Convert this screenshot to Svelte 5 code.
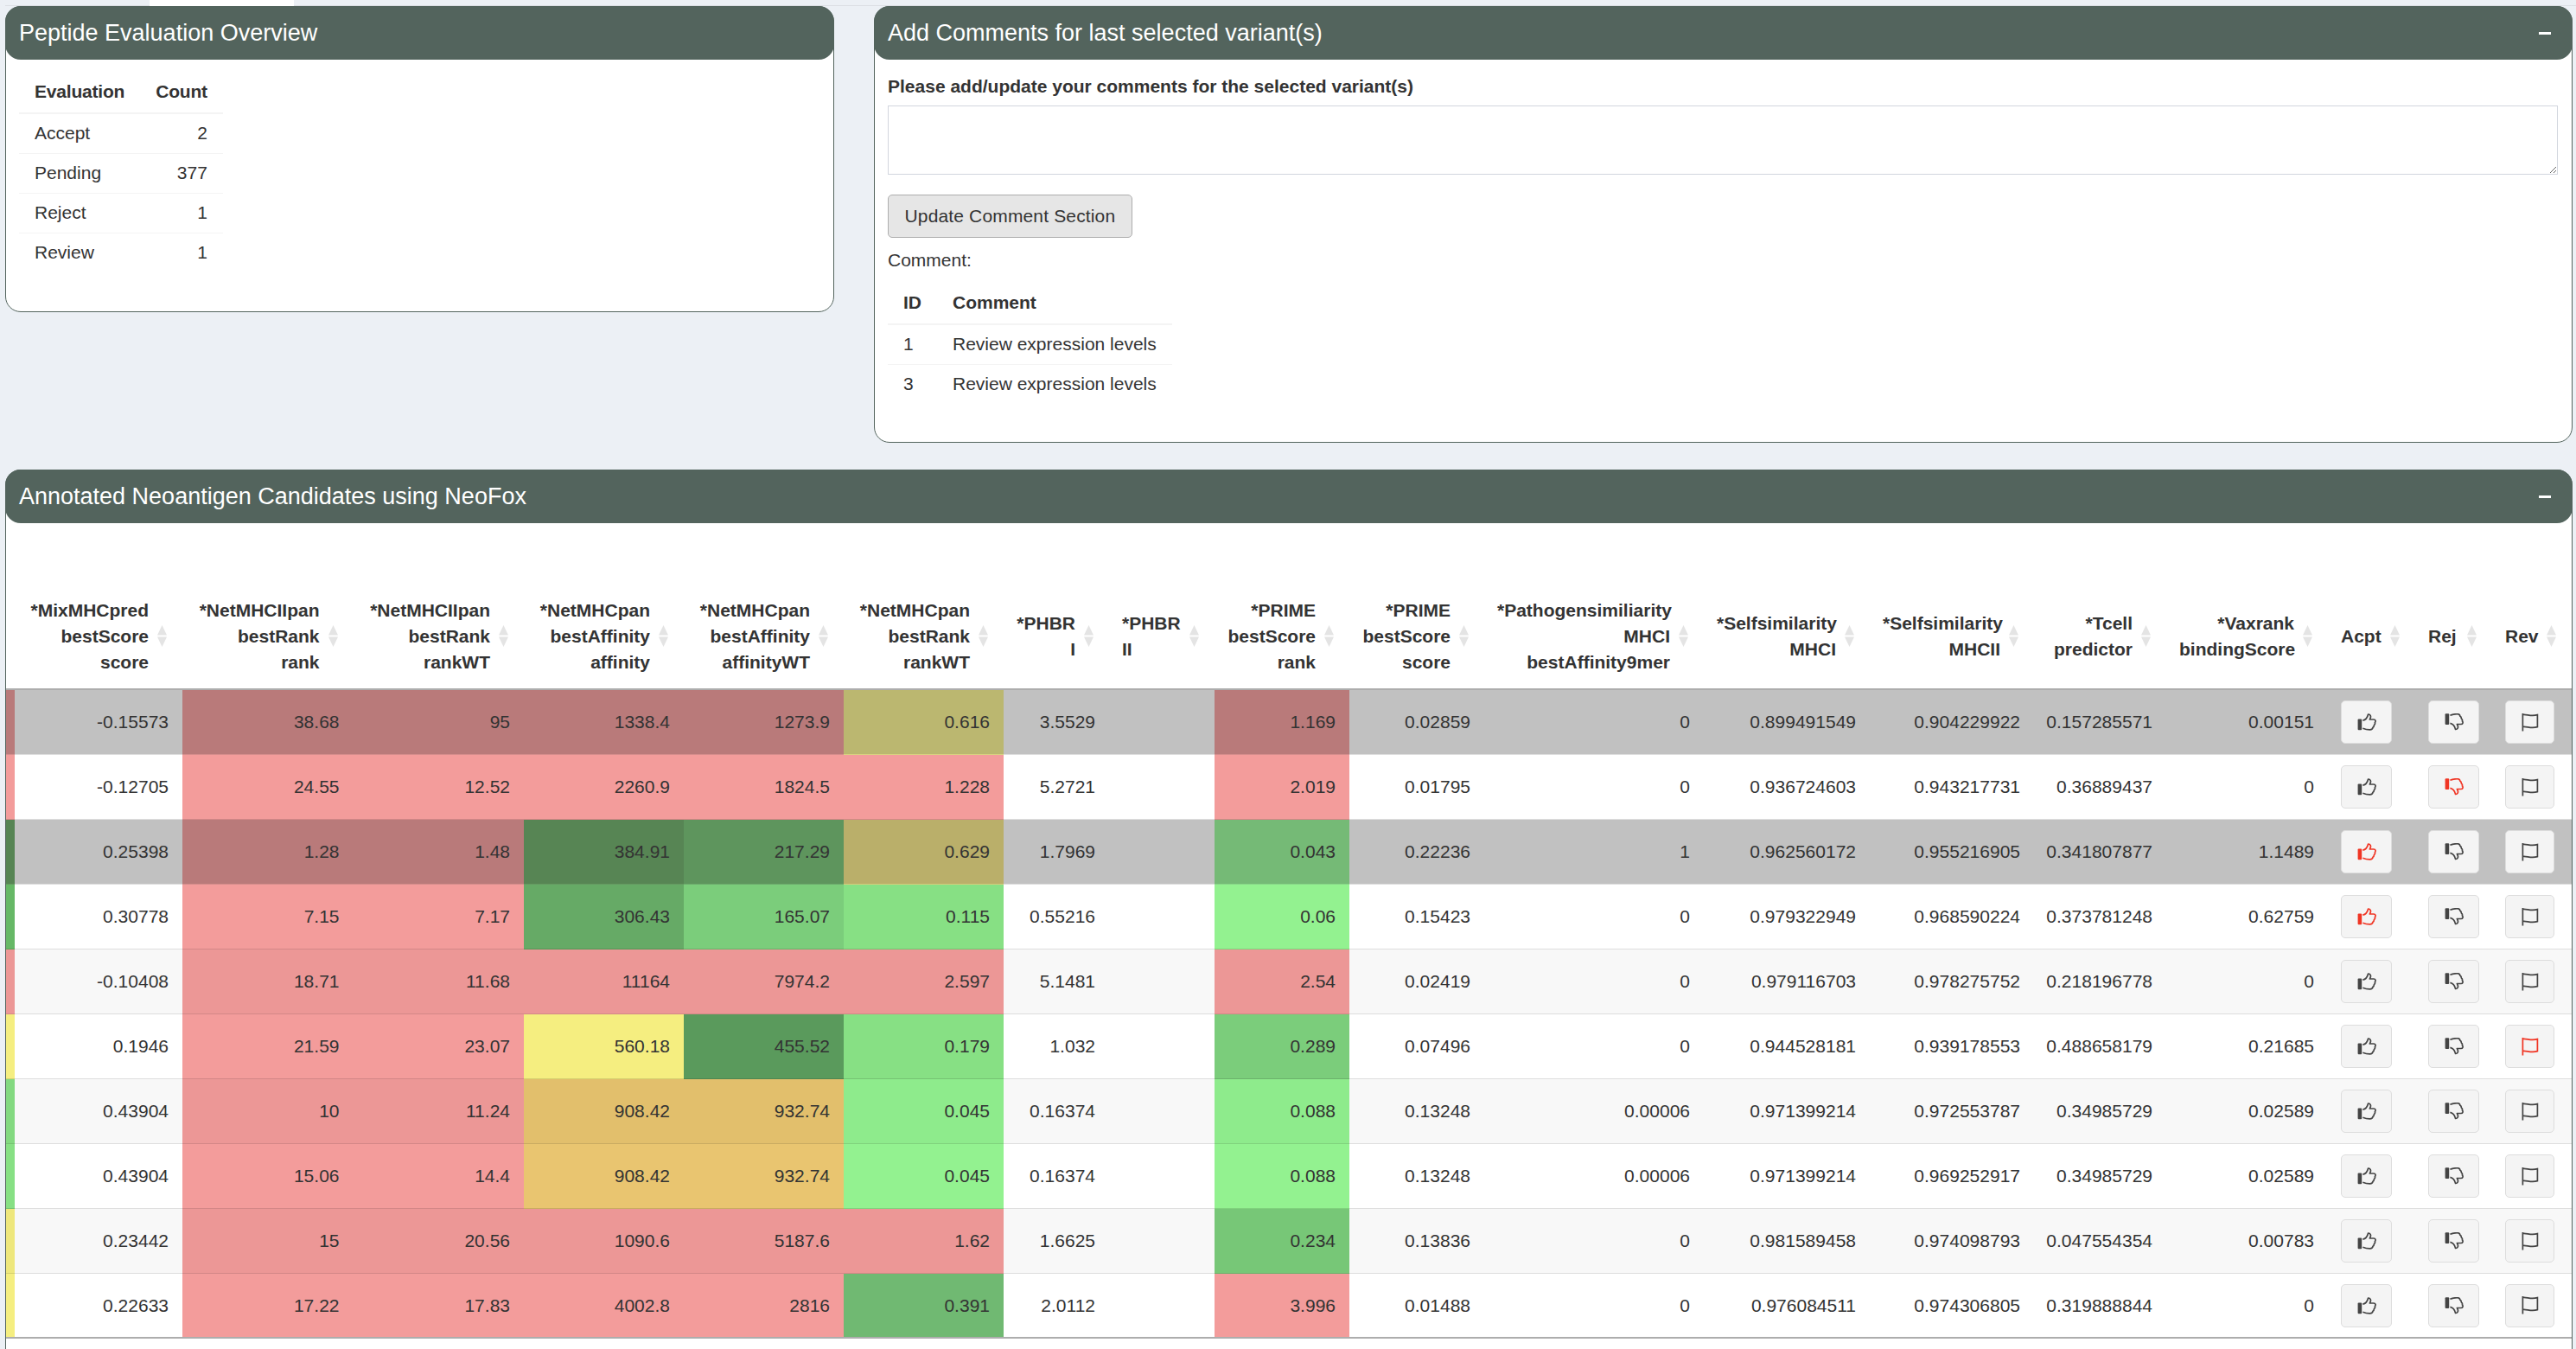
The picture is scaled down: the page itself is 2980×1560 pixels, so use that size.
<script lang="ts">
	const R = '#f39c9b';
	const RS = '#f5a2a1';
	const LG = '#93f290';
	const Y = '#f5ee80';
	const O = '#e9c570';

	const evaluations = [
		['Accept', 2],
		['Pending', 377],
		['Reject', 1],
		['Review', 1]
	];

	const comments = [
		[1, 'Review expression levels'],
		[3, 'Review expression levels']
	];

	const columns = [
		{ w: 194, lines: ['*MixMHCpred', 'bestScore', 'score'] },
		{ w: 197.5, lines: ['*NetMHCIIpan', 'bestRank', 'rank'] },
		{ w: 197.5, lines: ['*NetMHCIIpan', 'bestRank', 'rankWT'] },
		{ w: 185, lines: ['*NetMHCpan', 'bestAffinity', 'affinity'] },
		{ w: 185, lines: ['*NetMHCpan', 'bestAffinity', 'affinityWT'] },
		{ w: 185, lines: ['*NetMHCpan', 'bestRank', 'rankWT'] },
		{ w: 122, lines: ['*PHBR', 'I'] },
		{ w: 122, lines: ['*PHBR', 'II'], left: true },
		{ w: 156, lines: ['*PRIME', 'bestScore', 'rank'] },
		{ w: 156, lines: ['*PRIME', 'bestScore', 'score'] },
		{ w: 254, lines: ['*Pathogensimiliarity', 'MHCI', 'bestAffinity9mer'] },
		{ w: 192, lines: ['*Selfsimilarity', 'MHCI'] },
		{ w: 190, lines: ['*Selfsimilarity', 'MHCII'] },
		{ w: 153, lines: ['*Tcell', 'predictor'] },
		{ w: 187, lines: ['*Vaxrank', 'bindingScore'] },
		{ w: 101, lines: ['Acpt'], left: true },
		{ w: 89, lines: ['Rej'], left: true },
		{ w: 92, lines: ['Rev'], left: true }
	];

	// each value is [text, cell colour]; mark says which action button is red
	const rows = [
		{
			sel: true, strip: RS, mark: '',
			cells: [['-0.15573'], ['38.68', RS], ['95', RS], ['1338.4', RS], ['1273.9', RS], ['0.616', '#f8f294'], ['3.5529'], [''], ['1.169', RS], ['0.02859'], ['0'], ['0.899491549'], ['0.904229922'], ['0.157285571'], ['0.00151']]
		},
		{
			strip: R, mark: 'rej',
			cells: [['-0.12705'], ['24.55', R], ['12.52', R], ['2260.9', R], ['1824.5', R], ['1.228', R], ['5.2721'], [''], ['2.019', R], ['0.01795'], ['0'], ['0.936724603'], ['0.943217731'], ['0.36889437'], ['0']]
		},
		{
			sel: true, strip: '#74b070', mark: 'acpt',
			cells: [['0.25398'], ['1.28', RS], ['1.48', RS], ['384.91', '#74b070'], ['217.29', '#7dc57b'], ['0.629', '#f6e88d'], ['1.7969'], [''], ['0.043', '#9bf69c'], ['0.22236'], ['1'], ['0.962560172'], ['0.955216905'], ['0.341807877'], ['1.1489']]
		},
		{
			strip: '#66b866', mark: 'acpt',
			cells: [['0.30778'], ['7.15', R], ['7.17', R], ['306.43', '#66aa66'], ['165.07', '#7bcd7b'], ['0.115', '#87e084'], ['0.55216'], [''], ['0.06', LG], ['0.15423'], ['0'], ['0.979322949'], ['0.968590224'], ['0.373781248'], ['0.62759']]
		},
		{
			odd: true, strip: R, mark: '',
			cells: [['-0.10408'], ['18.71', R], ['11.68', R], ['11164', R], ['7974.2', R], ['2.597', R], ['5.1481'], [''], ['2.54', R], ['0.02419'], ['0'], ['0.979116703'], ['0.978275752'], ['0.218196778'], ['0']]
		},
		{
			strip: Y, mark: 'rev',
			cells: [['0.1946'], ['21.59', R], ['23.07', R], ['560.18', Y], ['455.52', '#5a9a5c'], ['0.179', '#87e084'], ['1.032'], [''], ['0.289', '#7bcd7b'], ['0.07496'], ['0'], ['0.944528181'], ['0.939178553'], ['0.488658179'], ['0.21685']]
		},
		{
			odd: true, strip: '#87e084', mark: '',
			cells: [['0.43904'], ['10', R], ['11.24', R], ['908.42', O], ['932.74', O], ['0.045', LG], ['0.16374'], [''], ['0.088', LG], ['0.13248'], ['0.00006'], ['0.971399214'], ['0.972553787'], ['0.34985729'], ['0.02589']]
		},
		{
			strip: '#87e084', mark: '',
			cells: [['0.43904'], ['15.06', R], ['14.4', R], ['908.42', O], ['932.74', O], ['0.045', LG], ['0.16374'], [''], ['0.088', LG], ['0.13248'], ['0.00006'], ['0.971399214'], ['0.969252917'], ['0.34985729'], ['0.02589']]
		},
		{
			odd: true, strip: Y, mark: '',
			cells: [['0.23442'], ['15', R], ['20.56', R], ['1090.6', R], ['5187.6', R], ['1.62', R], ['1.6625'], [''], ['0.234', '#7bcd7b'], ['0.13836'], ['0'], ['0.981589458'], ['0.974098793'], ['0.047554354'], ['0.00783']]
		},
		{
			strip: Y, mark: '',
			cells: [['0.22633'], ['17.22', R], ['17.83', R], ['4002.8', R], ['2816', R], ['0.391', '#70b972'], ['2.0112'], [''], ['3.996', R], ['0.01488'], ['0'], ['0.976084511'], ['0.974306805'], ['0.319888844'], ['0']]
		}
	];
</script>

{#snippet thumb()}
	<rect x="0.6" y="6.6" width="4.6" height="12.6" rx="1" fill="currentColor" />
	<path
		d="M6.4 8.2 C9.2 7.6 11.6 5.4 12.6 1 C15 0.8 16 3.4 15.2 5.2 L14.4 7 H19 C21.2 7 21.6 9.4 20.4 10.6 C20.8 12 20.2 13 19.4 13.6 C19.4 15 18.8 15.8 18 16.2 C17.8 18.2 16.4 18.8 14.6 18.8 C11.6 18.8 9.2 18.4 6.4 17.2"
		fill="none"
		stroke="currentColor"
		stroke-width="1.7"
		stroke-linejoin="round"
	/>
{/snippet}

<div class="tabs"><div class="tab"></div></div>

<div class="page">
	<div class="top">
		<section class="card evals">
			<header class="bar"><h3>Peptide Evaluation Overview</h3></header>
			<div class="evals-body">
				<table class="mini">
					<thead>
						<tr><th>Evaluation</th><th class="num">Count</th></tr>
					</thead>
					<tbody>
						{#each evaluations as [name, count]}
							<tr><td>{name}</td><td class="num">{count}</td></tr>
						{/each}
					</tbody>
				</table>
			</div>
		</section>

		<section class="card notes">
			<header class="bar">
				<h3>Add Comments for last selected variant(s)</h3>
				<span class="minus"></span>
			</header>
			<div class="notes-body">
				<label for="comment-box">Please add/update your comments for the selected variant(s)</label>
				<textarea id="comment-box"></textarea>
				<button class="update">Update Comment Section</button>
				<p>Comment:</p>
				<table class="mini">
					<thead>
						<tr><th>ID</th><th>Comment</th></tr>
					</thead>
					<tbody>
						{#each comments as [id, text]}
							<tr><td>{id}</td><td>{text}</td></tr>
						{/each}
					</tbody>
				</table>
			</div>
		</section>
	</div>

	<section class="card annotated">
		<header class="bar">
			<h3>Annotated Neoantigen Candidates using NeoFox</h3>
			<span class="minus"></span>
		</header>
		<div class="annotated-body">
			<table class="grid">
				<colgroup>
					<col style="width: 10px" />
					{#each columns as col}
						<col style="width: {col.w}px" />
					{/each}
				</colgroup>
				<thead>
					<tr>
						<th></th>
						{#each columns as col}
							<th class:left={col.left}>
								{#each col.lines as line, i}
									{#if i > 0}<br />{/if}{line}
								{/each}
								<svg class="sort" viewBox="0 0 11 25" width="11" height="25">
									<path d="M5.5 0 L11 11.5 H0 Z" />
									<path d="M5.5 25 L11 13.5 H0 Z" />
								</svg>
							</th>
						{/each}
					</tr>
				</thead>
				<tbody>
					{#each rows as row}
						<tr class:sel={row.sel} class:odd={row.odd}>
							<td style="background-color: {row.strip}"></td>
							{#each row.cells as [text, color]}
								<td style={color ? `background-color: ${color}` : undefined}>{text}</td>
							{/each}
							<td class="act">
								<button class="icon" class:on={row.mark === 'acpt'} aria-label="Accept">
									<svg viewBox="0 0 22 20" width="22" height="20">{@render thumb()}</svg>
								</button>
							</td>
							<td class="act">
								<button class="icon" class:on={row.mark === 'rej'} aria-label="Reject">
									<svg viewBox="0 0 22 20" width="22" height="20">
										<g transform="translate(0 19.5) scale(1 -1)">{@render thumb()}</g>
									</svg>
								</button>
							</td>
							<td class="act">
								<button class="icon" class:on={row.mark === 'rev'} aria-label="Review">
									<svg viewBox="0 0 20 21" width="20" height="21">
										<path
											d="M1.4 0 V20.6 M1.4 1.4 C6 0.6 11 4 18.4 1.6 V15.6 C11 18 6 14.6 1.4 15.4"
											fill="none"
											stroke="currentColor"
											stroke-width="1.7"
										/>
									</svg>
								</button>
							</td>
						</tr>
					{/each}
				</tbody>
			</table>
		</div>
	</section>
</div>

<style>
	:global(body) {
		margin: 0;
		overflow: hidden;
		background: #ecf0f5;
		color: #333;
		font-family: 'Liberation Sans', Arial, sans-serif;
		font-size: 21px;
		line-height: 30px;
	}

	.tabs {
		height: 6px;
		border-bottom: 1px solid #dcdfe4;
		margin-left: 6px;
	}

	.tab {
		width: 167px;
		height: 7px;
		margin-left: 167px;
		background: #fff;
	}

	.page {
		padding: 0 4px 0 6px;
	}

	.top {
		display: flex;
		align-items: flex-start;
		gap: 46px;
		margin-bottom: 31px;
	}

	.card {
		background: #fff;
		border: 1px solid #53645d;
		border-radius: 18px;
		box-sizing: border-box;
	}

	.evals {
		width: 959px;
		height: 354px;
	}

	.notes {
		flex: 1;
		height: 505px;
	}

	.annotated {
		height: 1017px;
		border-bottom: none;
		border-radius: 18px 18px 0 0;
	}

	.bar {
		display: flex;
		align-items: center;
		justify-content: space-between;
		height: 62px;
		margin: -1px -1px 0;
		padding: 0 25px 0 16px;
		background: #53645d;
		border-radius: 18px;
		color: #fff;
	}

	.bar h3 {
		margin: 0;
		font-size: 27px;
		font-weight: 400;
		line-height: 1;
	}

	.minus {
		width: 14px;
		height: 3px;
		background: #fff;
	}

	.evals-body {
		padding: 12px 15px;
	}

	.evals th {
		letter-spacing: -0.2px;
	}

	.mini {
		border-collapse: collapse;
	}

	.mini th {
		height: 50px;
		padding: 0 18px;
		border-bottom: 2px solid #f4f4f4;
		font-weight: 700;
		text-align: left;
		box-sizing: border-box;
	}

	.mini td {
		height: 46px;
		padding: 0 18px;
		border-top: 1px solid #f4f4f4;
		box-sizing: border-box;
	}

	.mini tbody tr:first-child td {
		border-top: none;
	}

	.mini .num {
		text-align: right;
	}

	.notes-body {
		padding: 16px 16px 0 15px;
	}

	label {
		display: block;
		font-weight: 700;
		margin-bottom: 7px;
	}

	textarea {
		display: block;
		box-sizing: border-box;
		width: 100%;
		height: 80px;
		margin-bottom: 23px;
		border: 1px solid #d2d6de;
		background: #fff;
	}

	.update {
		display: block;
		height: 50px;
		padding: 0 18.5px;
		margin-bottom: 11px;
		background: #e6e6e6;
		border: 1px solid #adadad;
		border-radius: 5px;
		color: #333;
		font: inherit;
		letter-spacing: 0.15px;
	}

	p {
		margin: 0 0 9px;
	}

	.annotated-body {
		padding-top: 70px;
	}

	.grid {
		table-layout: fixed;
		width: 2968px;
		border-collapse: separate;
		border-spacing: 0;
	}

	.grid th {
		position: relative;
		padding: 16px 39px 15px 15px;
		border-bottom: 2px solid #adadad;
		font-weight: 700;
		text-align: right;
		vertical-align: middle;
	}

	.grid th.left {
		text-align: left;
	}

	.grid th:first-child {
		padding: 0;
	}

	.sort {
		position: absolute;
		right: 18px;
		top: 50%;
		margin-top: -12.5px;
		fill: #e4e4e4;
	}

	.grid td {
		height: 75px;
		padding: 0 16px 0 10px;
		border-bottom: 1px solid rgba(0, 0, 0, 0.13);
		box-sizing: border-box;
		text-align: right;
		white-space: nowrap;
		background-color: #fff;
	}

	.grid tbody tr:last-child td {
		border-bottom: 2px solid #adadad;
	}

	.grid td:first-child {
		padding: 0;
	}

	.odd td {
		box-shadow: inset 0 0 0 9999px rgba(0, 0, 0, 0.026);
	}

	.sel td {
		box-shadow: inset 0 0 0 9999px rgba(0, 0, 0, 0.243);
	}

	.grid td.act {
		padding: 0 0 0 15px;
		text-align: left;
	}

	.icon {
		display: block;
		padding: 0 17.5px;
		height: 50px;
		background: #f4f4f4;
		border: 1px solid #ddd;
		border-radius: 5px;
		color: #444;
	}

	.icon svg {
		display: block;
	}

	.icon.on {
		color: #f03524;
	}
</style>
